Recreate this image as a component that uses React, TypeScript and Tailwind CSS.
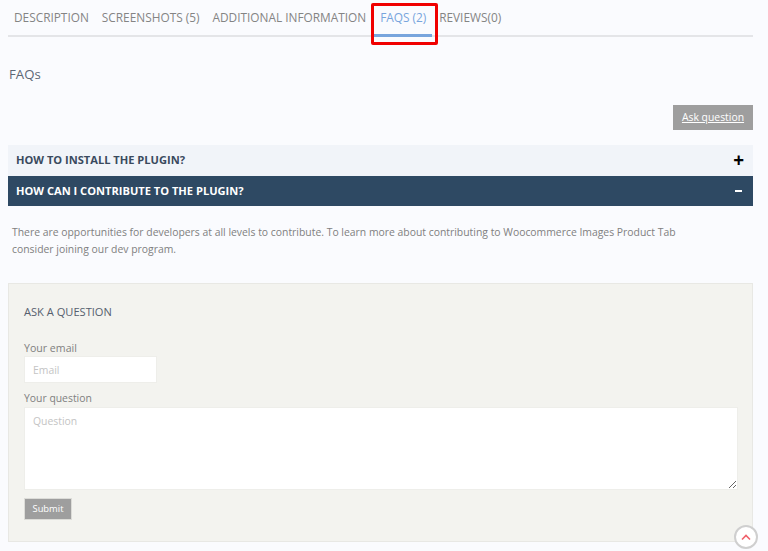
const tabs = [
  { label: "DESCRIPTION" },
  { label: "SCREENSHOTS (5)" },
  { label: "ADDITIONAL INFORMATION" },
  { label: "FAQS (2)", active: true },
  { label: "REVIEWS(0)" },
];

export default function App() {
  return (
    <div className="relative h-[551px] w-[768px] overflow-hidden bg-[#fafbfe] pl-2 pr-[15px] font-['Open_Sans',sans-serif] text-[#777]">
      {/* tabs */}
      <div className="flex h-[37px] items-start border-b-2 border-[#e4e5e8] pl-1.5">
        {tabs.map((t) => (
          <div
            key={t.label}
            className={`relative h-[37px] pt-2 text-[11.85px] leading-[18px] ${
              t.active
                ? "ml-[-5px] mr-[7px] w-[58px] border-b-[3px] border-[#78a5dd] pl-[6px] text-[#78a5dd]"
                : "mr-[13px] text-[#848484]"
            }`}
          >
            <span className="whitespace-nowrap">{t.label}</span>
          </div>
        ))}
      </div>

      {/* highlight round the active tab */}
      <div className="absolute left-[371px] top-[3px] h-[42px] w-[67px] rounded-[2px] border-[3px] border-[#f00000]" />

      <h2 className="mt-[27px] pl-px text-[13.2px] leading-5 text-[#5d6775]">FAQs</h2>

      <div className="mt-[21px] flex justify-end">
        <a className="flex h-[25px] w-[80px] items-center justify-center bg-[#9e9e9e] text-[10.4px] text-white underline">
          Ask question
        </a>
      </div>

      {/* accordion */}
      <div className="mt-[15px] flex h-[31px] items-center justify-between bg-[#f1f4f9] pl-2 pr-[9px]">
        <span className="text-[11.1px] font-bold text-[#3a4a5e]">HOW TO INSTALL THE PLUGIN?</span>
        <span className="text-[19px] font-bold leading-none text-black">+</span>
      </div>
      <div className="flex h-[30px] items-center justify-between bg-[#2e4963] pl-2 pr-[11px]">
        <span className="text-[11.1px] font-bold text-white">HOW CAN I CONTRIBUTE TO THE PLUGIN?</span>
        <span className="h-[2px] w-[7px] bg-white" />
      </div>

      <p className="mt-[18px] w-[700px] pl-1 text-[10.4px] leading-[17px] text-[#808080]">
        There are opportunities for developers at all levels to contribute. To learn more about contributing to
        Woocommerce Images Product Tab
        <br />
        consider joining our dev program.
      </p>

      {/* question form */}
      <div className="mt-[25px] h-[259px] border border-[#e8e8e4] bg-[#f3f3ef] px-[15px] pt-[19px]">
        <h3 className="text-[11.1px] leading-[18px] text-[#56606e]">ASK A QUESTION</h3>
        <label className="mt-[19px] block text-[10.6px] leading-[16px] text-[#808080]">Your email</label>
        <input
          readOnly
          placeholder="Email"
          className="block h-[27px] w-[133px] border border-[#eeeeea] bg-white px-2 text-[10.4px] outline-none placeholder:text-[#c4c4c4]"
        />
        <label className="mt-[7px] block text-[10.4px] leading-[16px] text-[#808080]">Your question</label>
        <textarea
          readOnly
          placeholder="Question"
          className="mt-px block h-[83px] w-[714px] border border-[#eeeeea] bg-white px-2 py-[6px] text-[10.4px] outline-none placeholder:text-[#c4c4c4]"
        />
        <button className="mt-2 h-[22px] w-[48px] border border-[#dcdcd8] bg-[#9e9e9e] text-[9.4px] text-white">
          Submit
        </button>
      </div>

      {/* back to top */}
      <div className="absolute left-[734px] top-[525px] flex h-6 w-6 items-center justify-center rounded-full border-2 border-[#cfcfcf] bg-white">
        <svg width="10" height="7" viewBox="0 0 10 7" fill="none" stroke="#f0606a" strokeWidth="1.6">
          <path d="M1 5.5 5 1.5 9 5.5" />
        </svg>
      </div>
    </div>
  );
}
